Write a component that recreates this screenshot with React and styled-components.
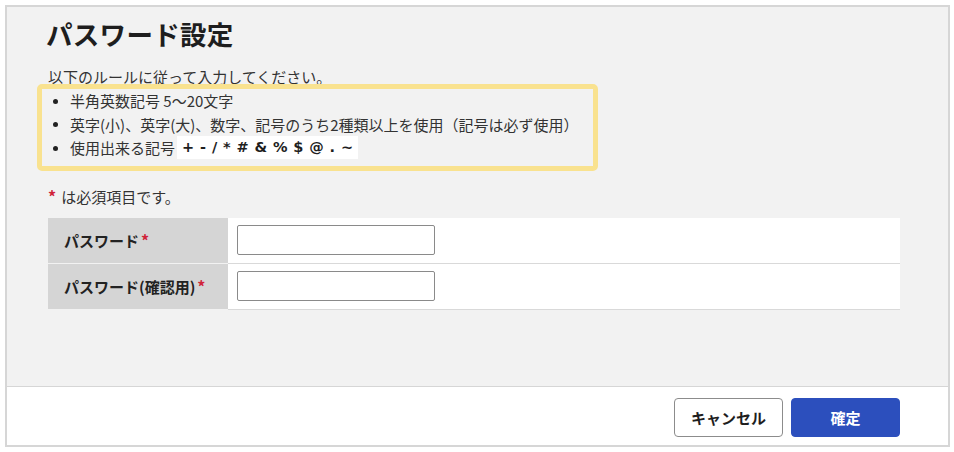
import React from "react";
import styled, { createGlobalStyle } from "styled-components";

const Global = createGlobalStyle`
  html, body { margin: 0; padding: 0; background: #ffffff; }
  body {
    font-family: "Noto Sans CJK JP", "Noto Sans", sans-serif;
    color: #222222;
  }
  * { box-sizing: border-box; }
`;

const Page = styled.div`
  padding: 5px 4px 5px 5px;
`;

const Dialog = styled.div`
  width: 945px;
  height: 442px;
  border: 2px solid #d6d6d6;
  display: flex;
  flex-direction: column;
  background: #f2f2f2;
`;

const Body = styled.div`
  flex: 1;
  padding: 9px 48px 0 41px;
  display: flex;
  flex-direction: column;
`;

const Title = styled.h1`
  margin: 0 0 0 -2px;
  font-size: 26.5px;
  line-height: 36px;
  font-weight: 700;
  color: #1e1e1e;
  letter-spacing: 0.3px;
`;

const Lead = styled.p`
  margin: 15px 0 0;
  font-size: 15px;
  line-height: 20px;
  color: #333;
`;

const RuleBox = styled.ul`
  margin: -3px 0 0 -11px;
  width: 561px;
  list-style: none;
  padding: 0 0 6px 10px;
  border: 5px solid #f9e28f;
  border-radius: 5px;
`;

const Rule = styled.li`
  position: relative;
  padding-left: 18px;
  font-size: 15px;
  height: 23.5px;
  color: #333;
  display: flex;
  align-items: center;

  &::before {
    content: "";
    position: absolute;
    left: 1px;
    top: 50%;
    width: 5px;
    height: 5px;
    margin-top: -2px;
    border-radius: 50%;
    background: #222;
  }
`;

const Symbols = styled.span`
  display: inline-block;
  margin-left: 2px;
  padding: 0 4px 0 5px;
  background: #ffffff;
  font-family: "DejaVu Sans", "Noto Sans", sans-serif;
  font-weight: 700;
  font-size: 14.5px;
  line-height: 23px;
  letter-spacing: 0.4px;
  color: #1e1e1e;
  white-space: pre;
`;

const Note = styled.p`
  margin: 15px 0 0;
  font-size: 15px;
  line-height: 20px;
  color: #333;
`;

const Req = styled.span`
  color: #d0243a;
  font-weight: 700;
  font-size: 16px;
  margin: ${(p) => (p.$gap ? "0 0 0 2px" : "0 5px 0 0")};
`;

const Table = styled.div`
  margin-top: 11px;
  display: flex;
  flex-direction: column;
`;

const Row = styled.div`
  display: grid;
  grid-template-columns: 180px 1fr;
  height: 46px;
  border-bottom: 1px solid #d9d9d9;
`;

const Label = styled.div`
  background: #d5d5d5;
  padding-left: 16px;
  display: flex;
  align-items: center;
  font-size: 15px;
  font-weight: 700;
  color: #222;
  border-bottom: 1px solid #f2f2f2;
  margin-bottom: -1px;
`;

const Cell = styled.div`
  background: #ffffff;
  padding-left: 9px;
  display: flex;
  align-items: center;
`;

const Input = styled.input`
  width: 198px;
  height: 30px;
  border: 1px solid #8a8a8a;
  border-radius: 2px;
  background: #fff;
  font-size: 14px;
  padding: 0 6px;
  outline: none;
`;

const Footer = styled.div`
  height: 59px;
  border-top: 1px solid #d6d6d6;
  background: #ffffff;
  display: flex;
  justify-content: flex-end;
  align-items: center;
  gap: 8px;
  padding: 3px 48px 0 0;
`;

const Button = styled.button`
  width: 109px;
  height: 39px;
  border-radius: 4px;
  font-family: "Noto Sans CJK JP", sans-serif;
  font-size: 15px;
  font-weight: 700;
  cursor: pointer;
  border: 1px solid ${(p) => (p.$primary ? "#2c4fbd" : "#8c8c8c")};
  background: ${(p) => (p.$primary ? "#2c4fbd" : "#ffffff")};
  color: ${(p) => (p.$primary ? "#ffffff" : "#1e1e1e")};
`;

export default function App() {
  return (
    <>
      <Global />
      <Page>
        <Dialog>
          <Body>
            <Title>パスワード設定</Title>
            <Lead>以下のルールに従って入力してください。</Lead>
            <RuleBox>
              <Rule>半角英数記号 5～20文字</Rule>
              <Rule>英字(小)、英字(大)、数字、記号のうち2種類以上を使用（記号は必ず使用）</Rule>
              <Rule>
                使用出来る記号
                <Symbols>+ - / * # &amp; % $ @ . ~</Symbols>
              </Rule>
            </RuleBox>
            <Note>
              <Req>*</Req>は必須項目です。
            </Note>
            <Table>
              <Row>
                <Label>
                  パスワード<Req $gap>*</Req>
                </Label>
                <Cell>
                  <Input type="password" />
                </Cell>
              </Row>
              <Row>
                <Label>
                  パスワード(確認用)<Req $gap>*</Req>
                </Label>
                <Cell>
                  <Input type="password" />
                </Cell>
              </Row>
            </Table>
          </Body>
          <Footer>
            <Button>キャンセル</Button>
            <Button $primary>確定</Button>
          </Footer>
        </Dialog>
      </Page>
    </>
  );
}
